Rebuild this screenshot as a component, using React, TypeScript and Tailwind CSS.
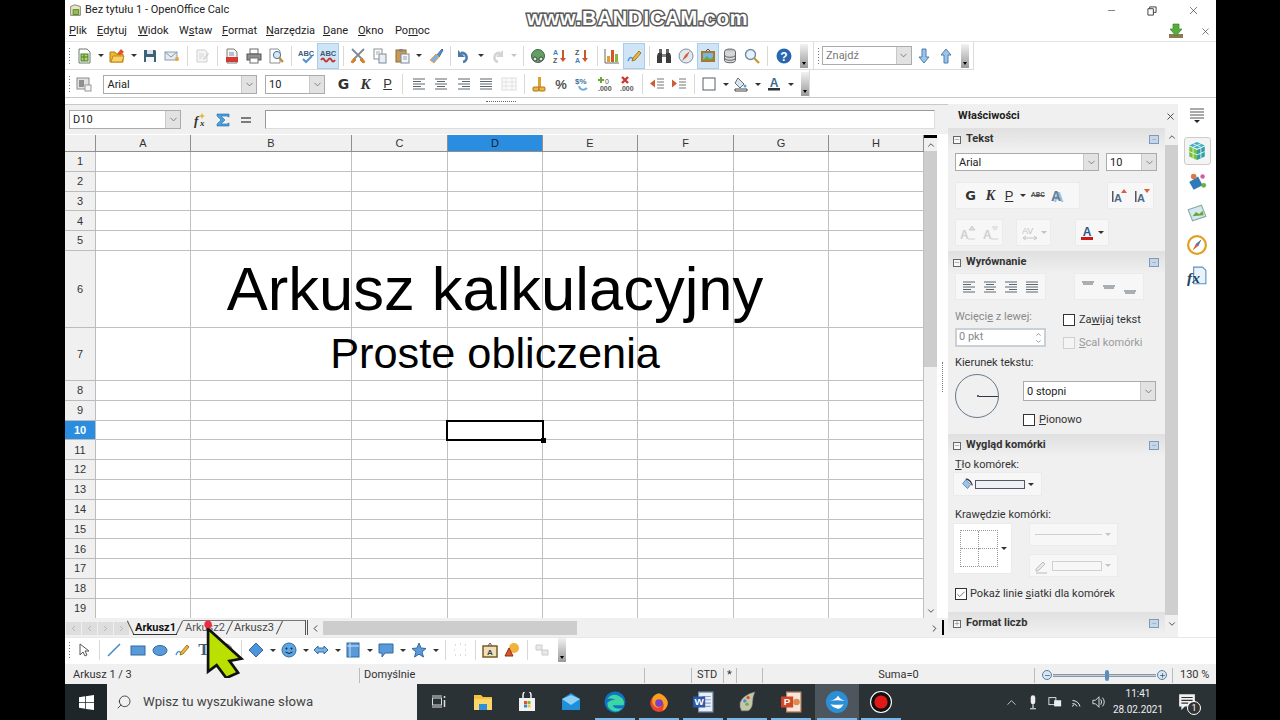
import React from "react";
import { ChevronDown, ChevronUp, ChevronLeft, ChevronRight, X, Minus, Plus, Search, Check } from "lucide-react";

const S = ({ children }: { children: React.ReactNode }) => (
  <svg viewBox="0 0 16 16" className="w-4 h-4 shrink-0">{children}</svg>
);
const Slot = ({ children, hl }: { children?: React.ReactNode; hl?: boolean }) => (
  <div className={`w-[22px] h-[26px] flex items-center justify-center shrink-0 ${hl ? "bg-[#cfe4f5] border border-[#a8cdec]" : ""}`}>{children}</div>
);
const Arrow = ({ dim }: { dim?: boolean }) => (
  <div className="w-[11px] h-[26px] flex items-center justify-center shrink-0">
    <div className={`w-0 h-0 border-l-[3px] border-r-[3px] border-t-[3px] border-l-transparent border-r-transparent ${dim ? "border-t-[#c4c4c4]" : "border-t-[#333]"}`} />
  </div>
);
const Sep = ({ narrow }: { narrow?: boolean }) => (
  <div className={`h-[26px] flex items-center justify-center shrink-0 ${narrow ? "w-[6px]" : "w-[8px]"}`}><div className="w-px h-[20px] bg-[#d8d8d8]" /></div>
);
const Grip = () => (
  <div className="w-[7px] h-[26px] ml-px flex flex-col justify-center gap-[2px] items-center shrink-0">
    {[0, 1, 2, 3, 4, 5].map((i) => <div key={i} className="w-px h-px bg-[#777]" />)}
  </div>
);
const Overflow = () => (
  <div className="w-[8px] h-[24px] bg-gradient-to-b from-[#f2f2f2] to-[#9a9a9a] relative shrink-0">
    <div className="absolute bottom-[3px] left-[2px] w-0 h-0 border-l-[2px] border-r-[2px] border-t-[3px] border-l-transparent border-r-transparent border-t-black" />
  </div>
);

const Ic = {
  calc: <S><path d="M3 1h8l3 3v11H3z" fill="#fff" stroke="#6b7a6b" /><rect x="5" y="6" width="7" height="7" fill="#a9d46a" stroke="#4d7d2c" /><path d="M5 9h7M8 6v7" stroke="#4d7d2c" /></S>,
  open: <S><path d="M1 4h5l1 2h7v8H1z" fill="#f2b632" stroke="#b57d10" /><path d="M8 6l4-5 3 3-4 3z" fill="#d9532c" /><path d="M2 14l2-6h11l-2 6z" fill="#f8d264" stroke="#c08a18" /></S>,
  save: <S><path d="M2 2h11l1 1v11H2z" fill="#3f6178" /><rect x="5" y="2" width="6" height="4" fill="#dbe4ec" /><rect x="4" y="9" width="8" height="5" fill="#f4f6f8" /></S>,
  mail: <S><rect x="1" y="4" width="12" height="8" fill="#e5ebf2" stroke="#8b9bad" /><path d="M1 4l6 5 6-5" fill="none" stroke="#8b9bad" /><circle cx="13" cy="11" r="2" fill="#e8a33a" /></S>,
  edit: <S><path d="M3 2h8l2 2v10H3z" fill="#f5f5f5" stroke="#cfcfcf" /><path d="M5 6h5M5 8h5M5 10h3" stroke="#d6d6d6" /><path d="M9 11l5-6 1 1-5 6z" fill="#cfcfcf" /></S>,
  pdf: <S><path d="M3 1h7l3 3v11H3z" fill="#f4f4f4" stroke="#7d7d7d" /><rect x="2" y="9" width="12" height="5" fill="#d63a2e" /><path d="M5 5h5M5 7h5" stroke="#7c8da0" /></S>,
  print: <S><rect x="4" y="1" width="8" height="5" fill="#fff" stroke="#6d6d6d" /><rect x="1" y="6" width="14" height="6" fill="#8f8f8f" stroke="#555" /><rect x="4" y="10" width="8" height="5" fill="#fff" stroke="#6d6d6d" /></S>,
  preview: <S><path d="M2 1h8l2 2v12H2z" fill="#fff" stroke="#8d8d8d" /><circle cx="9" cy="7" r="3.6" fill="#d5e8f7" stroke="#4a7299" /><path d="M11.5 10l3.5 4" stroke="#c58a2c" strokeWidth="2" /></S>,
  spell: <S><text x="0" y="7.5" fontSize="7.5" fontWeight="700" fill="#3d5a7a" fontFamily="Liberation Sans">ABC</text><path d="M5 11l3 3 6-6" fill="none" stroke="#4d94d8" strokeWidth="2" /></S>,
  auto: <S><text x="0" y="8" fontSize="7.5" fontWeight="700" fill="#3d5a7a" fontFamily="Liberation Sans">ABC</text><path d="M1 12q2-3 3.5 0t3.500 0 3.500 0 3.500 0" fill="none" stroke="#c9332b" strokeWidth="1.800" /></S>,
  cut: <S><path d="M2 1l10 10M14 1L4 11" stroke="#7f8a95" strokeWidth="1.800" /><path d="M4 10L1 14l2 1 3-3zM12 10l3 4-2 1-3-3z" fill="#d8802a" stroke="#d8802a" /></S>,
  copy: <S><rect x="2" y="1" width="8" height="10" fill="#fff" stroke="#8f8f8f" /><rect x="7" y="6" width="7" height="9" fill="#e8eef4" stroke="#7d8a97" /><path d="M4 4h4M4 6h2" stroke="#9aa" /></S>,
  paste: <S><rect x="2" y="2" width="10" height="12" fill="#c89a55" stroke="#8c6a32" /><rect x="5" y="1" width="4" height="3" fill="#888" /><rect x="7" y="6" width="8" height="9" fill="#f4f7fa" stroke="#7d8a97" /><path d="M9 9h4M9 11h4" stroke="#8fa3b5" /></S>,
  brush: <S><path d="M9 7l5-6 1 1-4 7z" fill="#5c93cf" stroke="#36689c" /><path d="M2 12l6-6 3 3-5 6z" fill="#7db1e4" stroke="#f0a53a" /></S>,
  undo: <S><path d="M5 5a4.500 4.500 0 1 1 2 9" fill="none" stroke="#4d7cab" strokeWidth="2.600" /><path d="M2 2v7h7z" fill="#4d7cab" /></S>,
  redo: <S><path d="M11 5a4.500 4.500 0 1 0-2 9" fill="none" stroke="#d4d4d4" strokeWidth="2.600" /><path d="M14 2v7H7z" fill="#d4d4d4" /></S>,
  globe: <S><circle cx="8" cy="8" r="6.500" fill="#62a060" stroke="#47604a" /><rect x="3" y="9" width="4" height="4" rx="2" fill="#e2e6ea" stroke="#444" /><rect x="9" y="9" width="4" height="4" rx="2" fill="#e2e6ea" stroke="#444" /></S>,
  sortAZ: <S><text x="1" y="7" fontSize="7" fontWeight="700" fill="#3d7fc0" fontFamily="Liberation Sans">A</text><text x="1" y="15" fontSize="7" fontWeight="700" fill="#555" fontFamily="Liberation Sans">Z</text><path d="M11 2v9" stroke="#c9572c" strokeWidth="2" /><path d="M8 10h6l-3 4z" fill="#c9572c" /></S>,
  sortZA: <S><text x="1" y="7" fontSize="7" fontWeight="700" fill="#555" fontFamily="Liberation Sans">Z</text><text x="1" y="15" fontSize="7" fontWeight="700" fill="#3d7fc0" fontFamily="Liberation Sans">A</text><path d="M11 2v9" stroke="#c9572c" strokeWidth="2" /><path d="M8 10h6l-3 4z" fill="#c9572c" /></S>,
  chart: <S><path d="M1 1v14h14" fill="none" stroke="#666" /><rect x="3" y="8" width="3" height="6" fill="#e2a02e" /><rect x="7" y="2" width="3" height="12" fill="#d4542c" /><rect x="11" y="6" width="3" height="8" fill="#8ab43a" /></S>,
  draw: <S><path d="M2 13q2-5 4-3t3 1" fill="none" stroke="#4d94d8" strokeWidth="1.500" /><path d="M7 10l6-7 2 2-6 7-3 1z" fill="#f0b63c" stroke="#a37820" /></S>,
  binoc: <S><path d="M2 5h4v10H1V8zM10 5h4l1 3v7h-5z" fill="#3c3c3c" /><rect x="3" y="1" width="3" height="4" fill="#666" /><rect x="10" y="1" width="3" height="4" fill="#666" /><rect x="6" y="6" width="4" height="3" fill="#888" /></S>,
  compass: <S><circle cx="8" cy="8" r="7" fill="#dfe9f2" stroke="#7e8f9e" /><path d="M12 3L9 9 4 13l3-6z" fill="#d9603a" /></S>,
  gallery: <S><rect x="1" y="3" width="14" height="11" fill="#a9772f" /><rect x="3" y="5" width="10" height="7" fill="#79b6e4" /><path d="M3 12l4-4 3 3 3-2v3z" fill="#6fa83a" /><path d="M6 3l2-2 2 2" stroke="#555" fill="none" /></S>,
  db: <S><ellipse cx="8" cy="3.500" rx="5.500" ry="2.500" fill="#bfc4c8" stroke="#666" /><path d="M2.500 3.500v9c0 3 11 3 11 0v-9" fill="#d5d8da" stroke="#666" /><path d="M2.500 7c0 3 11 3 11 0M2.500 10c0 3 11 3 11 0" fill="none" stroke="#666" /></S>,
  zoom: <S><circle cx="6.500" cy="6.500" r="5" fill="#e5f0fa" stroke="#6f8ba6" strokeWidth="1.400" /><path d="M10 10l5 5" stroke="#c89a3a" strokeWidth="2.400" /></S>,
  help: <S><circle cx="8" cy="8" r="7.500" fill="#2a67b0" /><text x="8" y="12.500" textAnchor="middle" fontSize="12" fontWeight="700" fill="#fff" fontFamily="Liberation Sans">?</text></S>,
  down: <S><path d="M6 1h4v8h3l-5 6-5-6h3z" fill="#9cc4e8" stroke="#4c7fb0" /></S>,
  up: <S><path d="M6 15h4V7h3L8 1 3 7h3z" fill="#9cc4e8" stroke="#4c7fb0" /></S>,
  styles: <S><rect x="1" y="2" width="12" height="11" fill="#e2e2e2" stroke="#8c8c8c" /><rect x="3" y="4" width="5" height="7" fill="#8f8f8f" /><rect x="9" y="9" width="6" height="6" fill="#f4f4f4" stroke="#999" /></S>,
  merge: <S><rect x="1" y="2" width="14" height="12" fill="#fbfbfb" stroke="#dedede" /><path d="M1 6h14M1 10h14M5 2v12M11 2v12" stroke="#e2e2e2" /></S>,
  coins: <S><path d="M7 1h3v10H7z" fill="#e0a030" /><rect x="2" y="11" width="6" height="4" rx="1" fill="#efb640" stroke="#a8741a" /><rect x="8" y="11" width="6" height="4" rx="1" fill="#efb640" stroke="#a8741a" /></S>,
  pct: <S><text x="8" y="13" textAnchor="middle" fontSize="13" fontWeight="700" fill="#555" fontFamily="Liberation Sans">%</text></S>,
  curpct: <S><text x="0" y="8" fontSize="8" fontWeight="700" fill="#3f6f9e" fontFamily="Liberation Sans">$%</text><path d="M4 10c1 4 5 5 8 2" fill="none" stroke="#6fb0de" strokeWidth="2" /></S>,
  dec1: <S><path d="M4 1v6M1 4h6" stroke="#6aa63a" strokeWidth="2" /><text x="8" y="8" fontSize="7" fill="#555" fontFamily="Liberation Sans">0</text><text x="1" y="15" fontSize="7" fontWeight="700" fill="#555" fontFamily="Liberation Sans">.000</text></S>,
  dec2: <S><path d="M3 1l6 6M9 1L3 7" stroke="#d0342c" strokeWidth="2.400" /><text x="1" y="15" fontSize="7" fontWeight="700" fill="#555" fontFamily="Liberation Sans">.000</text></S>,
  indL: <S><path d="M8 3h7M8 6h7M8 9h7M8 12h7" stroke="#777" /><path d="M1 7.500l5-4v8z" fill="#cf5a34" /></S>,
  indR: <S><path d="M8 3h7M8 6h7M8 9h7M8 12h7" stroke="#777" /><path d="M1 3.500l5 4-5 4z" fill="#cf5a34" /></S>,
  border: <S><rect x="2" y="2" width="12" height="12" fill="#fff" stroke="#55606c" /></S>,
  fill: <S><path d="M5 2l6 6-4 4-5-5z" fill="#d8e4ee" stroke="#5c7285" /><path d="M2 13h12v2H2z" fill="#fff" stroke="#444" /><circle cx="12" cy="10" r="1.500" fill="#5aa0d8" /></S>,
  fcolor: <S><text x="8" y="11" textAnchor="middle" fontSize="12" fontWeight="700" fill="#3a6b97" fontFamily="Liberation Sans">A</text><rect x="2" y="12" width="12" height="2.500" fill="#333" /></S>,
  fcolorR: <S><text x="8" y="11" textAnchor="middle" fontSize="12" fontWeight="700" fill="#2d5a88" fontFamily="Liberation Sans">A</text><rect x="2" y="12" width="12" height="3" fill="#d01818" /></S>,
  fx: <S><text x="1" y="13" fontSize="13" fontStyle="italic" fontWeight="700" fill="#333" fontFamily="Liberation Serif">f</text><text x="7" y="14" fontSize="9" fontStyle="italic" fontWeight="700" fill="#333" fontFamily="Liberation Serif">x</text><path d="M9 1l1 2 2 1-2 1-1 2-1-2-2-1 2-1z" fill="#e8b83c" /></S>,
  sum: <S><path d="M2 2h12v3l-2-1H6l4 4-4 4h6l2-1v3H2v-2l4-4-4-4z" fill="#4aa0de" stroke="#1f6aa8" strokeWidth=".6" /></S>,
  eq: <S><path d="M3 6h10M3 10h10" stroke="#555" strokeWidth="1.600" /></S>,
  alignL: <S><path d="M2 3h12M2 5.500h8M2 8h12M2 10.500h8M2 13h12" stroke="#5c6670" /></S>,
  alignC: <S><path d="M2 3h12M4 5.500h8M2 8h12M4 10.500h8M2 13h12" stroke="#5c6670" /></S>,
  alignR: <S><path d="M2 3h12M6 5.500h8M2 8h12M6 10.500h8M2 13h12" stroke="#5c6670" /></S>,
  alignJ: <S><path d="M2 3h12M2 5.500h12M2 8h12M2 10.500h12M2 13h12" stroke="#5c6670" /></S>,
  incA: <S><rect x="1" y="3" width="1.500" height="11" fill="#556" /><text x="3" y="14" fontSize="11" fontWeight="700" fill="#4a6a88" fontFamily="Liberation Sans">A</text><path d="M10 5l3-4 3 4z" fill="#d9603a" /></S>,
  decA: <S><rect x="1" y="3" width="1.500" height="11" fill="#556" /><text x="3" y="14" fontSize="11" fontWeight="700" fill="#4a6a88" fontFamily="Liberation Sans">A</text><path d="M10 1l3 4 3-4z" fill="#d9603a" /></S>,
  dimUp: <S><text x="0" y="14" fontSize="12" fontWeight="700" fill="#cfcfcf" fontFamily="Liberation Sans">A</text><path d="M9 5l3-4 3 4zM8 14h7" stroke="#cfcfcf" fill="#dcdcdc" /></S>,
  dimDn: <S><text x="0" y="14" fontSize="12" fontWeight="700" fill="#cfcfcf" fontFamily="Liberation Sans">A</text><path d="M9 2h6M10 4h4M8 14h7" stroke="#cfcfcf" /></S>,
  dimAV: <S><text x="0" y="9" fontSize="9" fill="#c4c4c4" fontFamily="Liberation Sans">AV</text><path d="M1 13h14M1 13l3-2M1 13l3 2M15 13l-3-2M15 13l-3 2" stroke="#c4c4c4" fill="none" /></S>,
  shadowA: <S><text x="2.500" y="14" fontSize="14" fontWeight="700" fill="#a8bccf" fontFamily="Liberation Sans">A</text><text x="0" y="13" fontSize="14" fontWeight="700" fill="#5a7f9f" fontFamily="Liberation Sans">A</text></S>,
};

const Combo = ({ text, className, dim }: { text: string; className: string; dim?: boolean }) => (
  <div className={`flex items-center bg-white border border-[#ababab] shrink-0 ${className}`}>
    <span className={`flex-1 pl-[3px] text-[11px] leading-none ${dim ? "text-[#777]" : "text-[#222]"}`}>{text}</span>
    <div className="w-[15px] h-full bg-[#e2e2e2] border-l border-[#c8c8c8] flex items-center justify-center">
      <ChevronDown size={11} strokeWidth={1.5} color="#555" />
    </div>
  </div>
);

const Toolbar1 = () => (
  <div className="h-[28px] flex items-center border-b border-[#dcdcdc] w-[909px] border-r pr-[4px]">
    <Grip />
    <Slot>{Ic.calc}</Slot><Arrow /><Slot>{Ic.open}</Slot><Arrow /><Slot>{Ic.save}</Slot><Slot>{Ic.mail}</Slot><Sep />
    <Slot>{Ic.edit}</Slot><Sep /><Slot>{Ic.pdf}</Slot><Slot>{Ic.print}</Slot><Slot>{Ic.preview}</Slot><Sep />
    <Slot>{Ic.spell}</Slot><Slot hl>{Ic.auto}</Slot><Sep />
    <Slot>{Ic.cut}</Slot><Slot>{Ic.copy}</Slot><Slot>{Ic.paste}</Slot><Arrow /><div className="w-[2px]" /><Slot>{Ic.brush}</Slot><Sep narrow />
    <Slot>{Ic.undo}</Slot><Arrow /><Slot>{Ic.redo}</Slot><Arrow dim /><Sep />
    <Slot>{Ic.globe}</Slot><Slot>{Ic.sortAZ}</Slot><Slot>{Ic.sortZA}</Slot><Sep />
    <Slot>{Ic.chart}</Slot><Slot hl>{Ic.draw}</Slot><Sep />
    <Slot>{Ic.binoc}</Slot><Slot>{Ic.compass}</Slot><Slot hl>{Ic.gallery}</Slot><Slot>{Ic.db}</Slot><Slot>{Ic.zoom}</Slot><Sep />
    <div className="w-[4px]" /><Slot>{Ic.help}</Slot><div className="w-[9px]" /><Overflow />
    <div className="w-px h-[28px] bg-[#dcdcdc] ml-[5px]" />
    <Grip />
    <Combo text="Znajdź" dim className="w-[90px] h-[19px]" />
    <div className="w-[1px]" /><Slot>{Ic.down}</Slot><Slot>{Ic.up}</Slot><div className="w-[8px]" /><Overflow />
  </div>
);

const Toolbar2 = () => (
  <div className="h-[28px] flex items-center w-[745px] border-r border-[#dcdcdc]">
    <Grip />
    <Slot>{Ic.styles}</Slot><div className="w-[9px]" />
    <Combo text="Arial" className="w-[154px] h-[19px]" /><div className="w-[8px]" />
    <Combo text="10" className="w-[60px] h-[19px]" /><div className="w-[8px]" />
    <Slot><span className="text-[14px] font-bold text-[#333] font-['DejaVu_Sans',sans-serif]">G</span></Slot>
    <Slot><span className="text-[15px] font-bold italic text-[#333] font-['Liberation_Serif',serif]">K</span></Slot>
    <Slot><span className="text-[13px] underline text-[#333] font-['Liberation_Sans',sans-serif]">P</span></Slot><Sep /><div className="w-[2px]" />
    <Slot>{Ic.alignL}</Slot><Slot>{Ic.alignC}</Slot><div className="w-px" /><Slot>{Ic.alignR}</Slot><Slot>{Ic.alignJ}</Slot><div className="w-px" /><Slot>{Ic.merge}</Slot><Sep />
    <Slot>{Ic.coins}</Slot><Slot>{Ic.pct}</Slot><Slot>{Ic.curpct}</Slot><Slot>{Ic.dec1}</Slot><Slot>{Ic.dec2}</Slot><Sep />
    <Slot>{Ic.indL}</Slot><Slot>{Ic.indR}</Slot><Sep />
    <Slot>{Ic.border}</Slot><Arrow /><div className="-ml-px" /><Slot>{Ic.fill}</Slot><Arrow /><Slot>{Ic.fcolor}</Slot><Arrow /><div className="w-[5px]" /><Overflow />
  </div>
);

const U = ({ pre = "", c, post = "" }: { pre?: string; c: string; post?: string }) => (
  <span>{pre}<span className="underline">{c}</span>{post}</span>
);

const Menu = () => (
  <div className="h-[21px] flex items-center pl-[4px] text-[11px] text-[#222] border-b border-[#e4e4e4]">
    <div className="w-[28px]"><U c="P" post="lik" /></div>
    <div className="w-[41px]"><U c="E" post="dytuj" /></div>
    <div className="w-[41px]"><U c="W" post="idok" /></div>
    <div className="w-[43px]"><U pre="W" c="s" post="taw" /></div>
    <div className="w-[44px]"><U c="F" post="ormat" /></div>
    <div className="w-[57px]"><U c="N" post="arzędzia" /></div>
    <div className="w-[35px]"><U c="D" post="ane" /></div>
    <div className="w-[37px]"><U c="O" post="kno" /></div>
    <div className="w-[40px]"><U pre="Po" c="m" post="oc" /></div>
    <div className="flex-1" />
    <svg viewBox="0 0 16 16" className="w-4 h-4 mr-[16px]"><rect x="1" y="11" width="14" height="4" fill="#8a7a4f" /><path d="M5 1h6v5h3l-6 7-6-7h3z" fill="#55ad3c" stroke="#2f7a20" strokeWidth=".6" /></svg>
    <X size={11} strokeWidth={1.5} color="#444" className="mr-[5px]" />
  </div>
);

const cols = ["A", "B", "C", "D", "E", "F", "G", "H"];
const rowNums = Array.from({ length: 19 }, (_, i) => i + 1);

const Sheet = () => (
  <div className="grid grid-cols-[31px_95px_161px_96px_95px_95px_96px_95px_95px] grid-rows-[17px_19.8px_19.8px_19.8px_19.8px_19.8px_77px_53px_19.8px_19.8px_19.8px_19.8px_19.8px_19.8px_19.8px_19.8px_19.8px_19.8px_19.8px_19.8px] w-[859px] h-[483px] overflow-hidden bg-white text-[11px] font-['Liberation_Sans',sans-serif]">
    <div className="bg-[#f0f0f0] border-r border-b border-[#8f8f8f]" />
    {cols.map((c) => (
      <div key={c} className={`flex items-center justify-center border-r border-b border-[#8f8f8f] ${c === "D" ? "bg-[#2b8de0] text-[#123]" : "bg-[#f0f0f0] text-[#333]"}`}>{c}</div>
    ))}
    {rowNums.map((r) => (
      <React.Fragment key={r}>
        <div className={`flex items-center justify-center border-r border-b border-[#bcbcbc] ${r === 10 ? "bg-[#2b8de0] text-white font-bold" : "bg-[#f0f0f0] text-[#333]"}`}>{r}</div>
        {cols.map((c) => (
          <div key={c} className={`flex items-center justify-center relative ${c === "D" && r === 10 ? "border-2 border-black -ml-[2px] -mr-px -mt-px -mb-px z-10" : "border-r border-b border-[#c0c0c0]"}`}>
            {c === "D" && r === 6 && <span className="whitespace-nowrap text-[61.5px] leading-none text-black z-10">Arkusz kalkulacyjny</span>}
            {c === "D" && r === 7 && <span className="whitespace-nowrap text-[43.3px] leading-none text-black z-10">Proste obliczenia</span>}
            {c === "D" && r === 10 && <div className="absolute -right-[4px] -bottom-[4px] w-[5px] h-[5px] bg-black" />}
          </div>
        ))}
      </React.Fragment>
    ))}
  </div>
);

const Section = ({ title, open, tight }: { title: string; open?: boolean; tight?: boolean }) => (
  <div className={`flex items-center bg-gradient-to-b from-[#e0e0e0] to-[#f0f0f0] pl-[5px] pr-[6px] shrink-0 ${tight ? "h-[22px]" : "h-[23px]"}`}>
    <div className="w-[8px] h-[8px] border border-[#666] flex items-center justify-center bg-white/60 mr-[5px]">
      {open ? <Plus size={7} strokeWidth={1.5} color="#444" /> : <Minus size={7} strokeWidth={1.5} color="#444" />}
    </div>
    <span className="text-[11px] font-bold text-[#333] flex-1">{title}</span>
    <div className="w-[10px] h-[9px] bg-[#c3d6ea] border border-[#7f9ab8] text-[6px] leading-[4px] text-center text-[#345]">…</div>
  </div>
);

const Group = ({ className, children }: { className: string; children?: React.ReactNode }) => (
  <div className={`bg-[#f7f7f7] border border-[#ebebeb] flex items-center shrink-0 ${className}`}>{children}</div>
);

const Box = ({ checked, dim }: { checked?: boolean; dim?: boolean }) => (
  <div className={`w-[12px] h-[12px] border flex items-center justify-center shrink-0 ${dim ? "border-[#d0d0d0] bg-[#f4f4f4]" : "border-[#333] bg-white"}`}>
    {checked && <Check size={11} strokeWidth={1.5} color="#222" />}
  </div>
);

const Sidebar = () => (
  <div className="w-[230px] flex flex-col shrink-0 bg-[#f0f0f0] relative">
    <div className="h-[24px] flex items-center justify-between pl-[10px] pr-[2px] shrink-0 -mt-[30px] bg-[#f0f0f0]">
      <span className="text-[11px] font-bold text-[#222]">Właściwości</span>
      <X size={11} strokeWidth={2} color="#444" />
    </div>
    <div className="flex flex-1 min-h-0">
      <div className="w-[217px] flex flex-col text-[11px] text-[#333]">
        <Section title="Tekst" />
        <div className="flex mt-[2px] pl-[7px] gap-[7px]">
          <Combo text="Arial" className="w-[144px] h-[18px]" />
          <Combo text="10" className="w-[51px] h-[18px]" />
        </div>
        <div className="flex mt-[11px] pl-[7px]">
          <Group className="w-[125px] h-[27px] pl-[5px]">
            <span className="w-[19px] text-[13px] font-bold text-center font-['DejaVu_Sans',sans-serif]">G</span>
            <span className="w-[21px] text-[14px] font-bold italic text-center font-['Liberation_Serif',serif]">K</span>
            <span className="w-[16px] text-[13px] underline text-center font-['Liberation_Sans',sans-serif]">P</span>
            <Arrow />
            <span className="w-[20px] text-[7px] font-bold text-center text-[#555] line-through">ABC</span>
            <div className="w-[22px] flex justify-center">{Ic.shadowA}</div>
          </Group>
          <Group className="w-[47px] h-[27px] ml-[27px] justify-around">{Ic.incA}{Ic.decA}</Group>
        </div>
        <div className="flex mt-[10px] pl-[7px]">
          <Group className="w-[48px] h-[27px] justify-around">{Ic.dimUp}{Ic.dimDn}</Group>
          <Group className="w-[35px] h-[27px] ml-[13px] pl-[5px]">{Ic.dimAV}<Arrow dim /></Group>
          <Group className="w-[34px] h-[27px] ml-[24px] pl-[3px]">{Ic.fcolorR}<Arrow /></Group>
        </div>
        <div className="mt-[5px]"><Section title="Wyrównanie" /></div>
        <div className="flex -mt-px pl-[7px]">
          <Group className="w-[91px] h-[27px] justify-around px-[3px]">{Ic.alignL}{Ic.alignC}{Ic.alignR}{Ic.alignJ}</Group>
          <Group className="w-[70px] h-[27px] ml-[28px] justify-around px-[2px]">
            <svg viewBox="0 0 16 16" className="w-4 h-4"><path d="M2 3h12M3 5h10" stroke="#5c6670" /></svg>
            <svg viewBox="0 0 16 16" className="w-4 h-4"><path d="M2 7h12M3 9h10" stroke="#5c6670" /></svg>
            <svg viewBox="0 0 16 16" className="w-4 h-4"><path d="M2 12h12M3 14h10" stroke="#5c6670" /></svg>
          </Group>
        </div>
        <div className="flex mt-[9px] h-[46px] pl-[7px]">
          <div className="w-[108px]">
            <div className="h-[17px] flex items-center text-[#8a8a8a]"><U pre="Wcięci" c="e" post=" z lewej:" /></div>
            <div className="mt-[2px] w-[91px] h-[19px] bg-white border-2 border-[#c9d0d6] flex items-center pl-[2px] text-[#888]">
              <span className="flex-1">0 pkt</span>
              <div className="w-[12px] flex flex-col items-center text-[#555]"><ChevronUp size={7} /><ChevronDown size={7} /></div>
            </div>
          </div>
          <div className="flex flex-col">
            <div className="mt-[4px] h-[14px] flex items-center gap-[4px]"><Box /><U pre="Za" c="w" post="ijaj tekst" /></div>
            <div className="mt-[9px] h-[14px] flex items-center gap-[4px] text-[#9a9a9a]"><Box dim /><U c="S" post="cal komórki" /></div>
          </div>
        </div>
        <div className="h-[16px] pl-[7px] flex items-center">Kierunek tekstu:</div>
        <div className="flex h-[63px] pl-[7px]">
          <div className="w-[44px] h-[44px] mt-[3px] rounded-full border border-[#66788a] relative flex items-center shrink-0">
            <div className="ml-[21px] w-[2px] h-[2px] bg-[#334] rounded-full" />
            <div className="w-[20px] h-px bg-[#334]" />
          </div>
          <div className="ml-[24px] flex flex-col">
            <Combo text="0 stopni" className="w-[133px] h-[20px] mt-[10px]" />
            <div className="mt-[12px] h-[14px] flex items-center gap-[4px]"><Box /><U c="P" post="ionowo" /></div>
          </div>
        </div>
        <Section title="Wygląd komórki" />
        <div className="h-[16px] pl-[7px] flex items-center"><U c="T" post="ło komórek:" /></div>
        <Group className="ml-[5px] -mt-px w-[89px] h-[24px] pl-[7px] bg-[#f5f5f5]">
          <svg viewBox="0 0 16 16" className="w-[13px] h-[13px]"><path d="M6 2l6 6-4 5-6-6z" fill="#9cc4e8" stroke="#4c7fb0" /><path d="M6 1q6 1 8 8" fill="none" stroke="#333" strokeWidth="1.500" /></svg>
          <div className="ml-px w-[50px] h-[9px] border border-[#556] bg-[#eef1f4]" />
          <Arrow />
        </Group>
        <div className="h-[16px] mt-[11px] pl-[7px] flex items-center">Krawędzie komórki:</div>
        <div className="flex pl-[5px]">
          <Group className="w-[59px] h-[51px] pl-[6px] bg-white">
            <div className="w-[38px] h-[37px] grid grid-cols-2 grid-rows-2 border border-dotted border-[#999]">
              <div className="border-r border-b border-dotted border-[#999]" /><div className="border-b border-dotted border-[#999]" /><div className="border-r border-dotted border-[#999]" /><div />
            </div>
            <Arrow />
          </Group>
          <div className="ml-[17px] flex flex-col gap-[8px]">
            <Group className="w-[89px] h-[23px] pl-[5px]"><div className="w-[67px] h-px bg-[#cfcfcf]" /><Arrow dim /></Group>
            <Group className="w-[89px] h-[23px] pl-[3px]">
              <svg viewBox="0 0 16 16" className="w-4 h-4"><path d="M3 11l7-7 2 2-7 7H3z" fill="#e8e8e8" stroke="#c0c0c0" /><path d="M3 15h11" stroke="#bbb" /></svg>
              <div className="ml-[3px] w-[50px] h-[10px] border border-[#d0d0d0]" />
              <Arrow dim />
            </Group>
          </div>
        </div>
        <div className="mt-[10px] h-[14px] pl-[7px] flex items-center gap-[3px]"><Box checked /><span>Pokaż linie <span className="underline">s</span>iatki dla komórek</span></div>
        <div className="mt-[11px]"><Section title="Format liczb" open /></div>
      </div>
      <div className="w-[13px] flex flex-col items-center bg-[#cfcfcf] mb-[5px]">
        <div className="h-[17px] w-full bg-[#f0f0f0] flex items-center justify-center"><ChevronUp size={10} strokeWidth={2} color="#333" /></div>
        <div className="flex-1" />
        <div className="h-[17px] w-full bg-[#f0f0f0] flex items-center justify-center"><ChevronDown size={10} strokeWidth={2} color="#333" /></div>
      </div>
    </div>
  </div>
);

const DeckBar = () => (
  <div className="w-[38px] flex flex-col items-center bg-white shrink-0 -mt-[30px] relative">
    <svg viewBox="0 0 16 16" className="w-4 h-4 mt-[3px]"><path d="M1 2h14M1 5h14M1 8h14M1 11h14" stroke="#555" /><path d="M5 13h6l-3 3z" fill="#222" /></svg>
    <div className="mt-[14px] w-[27px] h-[28px] bg-[#f4f4f4] border border-[#ccc] rounded-[3px] flex items-center justify-center">
      <svg viewBox="0 0 18 18" className="w-[20px] h-[20px]"><path d="M9 1l7 3-7 3-7-3z" fill="#39b0c8" /><path d="M2 5l7 3v9l-7-3z" fill="#78c23c" /><path d="M16 5L9 8v9l7-3z" fill="#2f9ea8" /><path d="M5.500 2.500l7 3M12.500 2.500l-7 3M2 9.500l7 3 7-3M5.500 6.500v9M12.500 6.500v9" fill="none" stroke="#eaf6f0" strokeWidth=".8" /></svg>
    </div>
    <svg viewBox="0 0 18 18" className="w-[20px] h-[20px] mt-[7px]"><path d="M2 9l8-5 4 8-8 4z" fill="#2f7ab8" /><circle cx="6" cy="4" r="2.500" fill="#e0744a" /><circle cx="14" cy="4" r="2" fill="#d858a8" /><circle cx="15" cy="12" r="2.200" fill="#6cb044" /></svg>
    <svg viewBox="0 0 18 18" className="w-[20px] h-[20px] mt-[11px]"><path d="M1 6l12-4 4 10-12 4z" fill="#d5e8f2" stroke="#8aa" /><path d="M5 12l3-4 3 2 3-3 1 4z" fill="#6aa83a" /></svg>
    <svg viewBox="0 0 18 18" className="w-[20px] h-[20px] mt-[12px]"><circle cx="9" cy="9" r="8" fill="#fff" stroke="#e0a020" strokeWidth="2" /><path d="M13 4l-3 6-5 4 3-6z" fill="#d9603a" /><path d="M13 4l-5 4 2 2z" fill="#4c7fb0" /></svg>
    <svg viewBox="0 0 18 18" className="w-[20px] h-[20px] mt-[11px]"><path d="M6 1h8l3 3v12H6z" fill="#eaf3fa" stroke="#5c90c0" /><text x="0" y="15" fontSize="14" fontStyle="italic" fontWeight="700" fill="#24435f" fontFamily="Liberation Serif">fx</text></svg>
  </div>
);

const TabsBar = () => (
  <div className="h-[19px] flex items-stretch bg-[#f0f0f0] text-[11px] text-[#333]">
    <div className="flex items-center w-[64px] pl-px gap-px pt-px">
      {[0, 1, 2, 3].map((i) => (
        <div key={i} className="w-[15px] h-[13px] bg-[#dedede] flex items-center justify-center">
          {i < 2 ? <ChevronLeft size={9} color="#aaa" /> : <ChevronRight size={9} color="#aaa" />}
        </div>
      ))}
    </div>
    <div className="flex items-center w-[176px] pt-[2px] relative">
      <span className="font-bold ml-[6px] w-[50px] text-[#111]">Arkusz1</span>
      <span className="w-[49px] text-[#555]">Arkusz2</span>
      <span className="text-[#444]">Arkusz3</span>
      <div className="absolute left-[1px] top-[2px] w-px h-[15px] bg-[#555] -rotate-[25deg]" />
      <div className="absolute left-[50px] top-[2px] w-px h-[15px] bg-[#555] rotate-[25deg]" />
      <div className="absolute left-[100px] top-[2px] w-px h-[15px] bg-[#555] rotate-[25deg]" />
      <div className="absolute left-[150px] top-[2px] w-px h-[15px] bg-[#555] rotate-[25deg]" />
      <div className="absolute left-[54px] right-0 top-[2px] h-px bg-[#777]" />
      <div className="absolute left-[4px] w-[44px] bottom-[2px] h-px bg-[#333]" />
    </div>
    <div className="w-[3px] h-[15px] mt-[2px] border-x border-[#555]" />
    <div className="w-[15px] flex items-center justify-center pt-px"><ChevronLeft size={11} strokeWidth={2} color="#333" /></div>
    <div className="flex-1 flex items-center pt-px">
      <div className="w-[254px] h-[14px] bg-[#cdcdcd]" />
    </div>
    <div className="w-[15px] flex items-center justify-center pt-px"><ChevronRight size={11} strokeWidth={2} color="#333" /></div>
    <div className="w-[2px] h-[15px] mt-[2px] bg-black" />
    <div className="w-[4px]" />
  </div>
);

const DrawBar = () => (
  <div className="h-[27px] flex items-center bg-white border-t border-[#e8e8e8] pb-[2px]">
    <Grip />
    <Slot>
      <svg viewBox="0 0 16 16" className="w-4 h-4"><path d="M4 2v11l3-3 2 4 2-1-2-4h4z" fill="#fff" stroke="#555" /></svg>
    </Slot>
    <Sep />
    <Slot><svg viewBox="0 0 16 16" className="w-4 h-4"><path d="M2 14L14 2" stroke="#3f86c8" strokeWidth="1.500" /></svg></Slot><div className="w-[2px]" />
    <Slot><svg viewBox="0 0 16 16" className="w-4 h-4"><rect x="1" y="4" width="14" height="9" fill="#5a9ad8" stroke="#2f6aa0" /></svg></Slot>
    <Slot><svg viewBox="0 0 16 16" className="w-4 h-4"><ellipse cx="8" cy="8.500" rx="7" ry="5" fill="#5a9ad8" stroke="#2f6aa0" /></svg></Slot>
    <Slot>{Ic.draw}</Slot>
    <Slot><span className="text-[17px] font-bold text-[#3a5a78] font-['Liberation_Serif',serif]">T</span></Slot>
    <Slot><svg viewBox="0 0 16 16" className="w-4 h-4"><circle cx="8" cy="8" r="6" fill="#eee" stroke="#777" /></svg></Slot>
    <Sep />
    <Slot><svg viewBox="0 0 16 16" className="w-4 h-4"><path d="M8 1l7 7-7 7-7-7z" fill="#4d94d8" stroke="#2f6aa0" /></svg></Slot><Arrow />
    <Slot><svg viewBox="0 0 16 16" className="w-4 h-4"><circle cx="8" cy="8" r="7" fill="#5fa7e4" stroke="#2f6aa0" /><circle cx="5.500" cy="6.500" r="1" fill="#123" /><circle cx="10.500" cy="6.500" r="1" fill="#123" /><path d="M4.500 10q3.500 3 7 0" fill="none" stroke="#123" /></svg></Slot><Arrow />
    <div className="-ml-px" /><Slot><svg viewBox="0 0 16 16" className="w-4 h-4"><path d="M1 8l4-4v2h6V4l4 4-4 4v-2H5v2z" fill="#79b2e6" stroke="#2f6aa0" /></svg></Slot><Arrow />
    <div className="-ml-px" /><Slot><svg viewBox="0 0 16 16" className="w-4 h-4"><rect x="2" y="1" width="12" height="14" fill="#5a9ad8" stroke="#2f6aa0" /><path d="M5 1v14M2 4h12" stroke="#cfe4f5" /></svg></Slot><Arrow />
    <Slot><svg viewBox="0 0 16 16" className="w-4 h-4"><path d="M1 2h14v9H7l-3 4v-4H1z" fill="#5a9ad8" stroke="#2f6aa0" /></svg></Slot><Arrow />
    <Slot><svg viewBox="0 0 16 16" className="w-4 h-4"><path d="M8 1l2 5 5 .5-4 3.500 1.500 5L8 12.200 3.500 15 5 10 1 6.500 6 6z" fill="#5a9ad8" stroke="#2f6aa0" /></svg></Slot><Arrow />
    <Sep />
    <Slot><svg viewBox="0 0 16 16" className="w-4 h-4"><path d="M3 3h1M8 2h1M13 3h1M2 8h1M13 8h1M3 13h1M8 13h1M13 13h1" stroke="#bbb" /></svg></Slot>
    <Sep />
    <Slot><svg viewBox="0 0 16 16" className="w-4 h-4"><rect x="1" y="4" width="14" height="11" fill="#f0e0b8" stroke="#7a5a24" strokeWidth="1.500" /><path d="M6 4l2-3 2 3" fill="none" stroke="#555" /><text x="8" y="13" textAnchor="middle" fontSize="8" fontWeight="700" fill="#345" fontFamily="Liberation Sans">A</text></svg></Slot>
    <Slot><svg viewBox="0 0 16 16" className="w-4 h-4"><circle cx="10" cy="6" r="5" fill="#f0b23c" /><path d="M1 14l4-8 4 8z" fill="#d9532c" stroke="#8a3318" /></svg></Slot>
    <Sep />
    <Slot><svg viewBox="0 0 16 16" className="w-4 h-4"><path d="M2 3h6v5H2zM8 8h6v5H8z" fill="#e8e8e8" stroke="#ccc" /></svg></Slot>
    <div className="w-[5px]" /><Overflow />
  </div>
);

const StatusBar = () => (
  <div className="h-[20px] flex items-center bg-[#f0f0f0] text-[11px] text-[#333] pt-[2px]">
    <div className="w-[294px] pl-[8px]">Arkusz 1 / 3</div>
    <div className="w-[285px] h-[15px] flex items-center border-l border-[#bbb] pl-[4px]">Domyślnie</div>
    <div className="w-[47px] h-[15px] border-l border-[#bbb]" />
    <div className="w-[32px] h-[15px] flex items-center border-l border-[#bbb] pl-[5px]">STD</div>
    <div className="w-[13px] h-[15px] flex items-center border-l border-[#bbb] pl-[3px]">*</div>
    <div className="w-[26px] h-[15px] border-l border-[#bbb]" />
    <div className="w-[272px] h-[15px] flex items-center justify-center border-l border-[#bbb]">Suma=0</div>
    <div className="w-[138px] h-[15px] flex items-center border-l border-[#bbb] pl-[7px]">
      <div className="w-[10px] h-[10px] rounded-full border border-[#5c7f9f] bg-[#d5e6f4] flex items-center justify-center shrink-0"><Minus size={7} color="#234" /></div>
      <div className="w-[103px] mx-[1px] h-[3px] bg-[#c4ccd4] border-y border-[#8a98a6] relative shrink-0">
        <div className="absolute left-[52px] -top-[5px] w-[4px] h-[11px] bg-[#5c8fbf] rounded-sm" />
      </div>
      <div className="w-[10px] h-[10px] rounded-full border border-[#5c7f9f] bg-[#d5e6f4] flex items-center justify-center shrink-0"><Plus size={7} color="#234" /></div>
    </div>
    <div className="flex-1 h-[15px] flex items-center border-l border-[#bbb] pl-[7px]">130 %</div>
  </div>
);

const TaskIcon = ({ children, running, active }: { children: React.ReactNode; running?: boolean; active?: boolean }) => (
  <div className={`w-[44px] h-[36px] flex items-center justify-center relative shrink-0 ${active ? "bg-[#4c565c]" : ""}`}>
    {children}
    {running && <div className="absolute bottom-0 left-[2px] right-[2px] h-[2px] bg-[#76b9ed]" />}
  </div>
);

const Taskbar = () => (
  <div className="h-[36px] flex items-center bg-[#2b3236] text-white shrink-0">
    <div className="w-[42px] h-full bg-[#1f2629] flex items-center justify-center">
      <svg viewBox="0 0 16 16" className="w-[15px] h-[15px]"><path d="M0 2.300l6.500-.9v6.200H0zM7.300 1.300L16 0v7.600H7.300zM0 8.400h6.500v6.200L0 13.700zM7.300 8.400H16V16l-8.700-1.200z" fill="#fff" /></svg>
    </div>
    <div className="w-[310px] h-full bg-[#f0f0f0] flex items-center pl-[9px] gap-[11px] text-[#444] text-[13.2px]">
      <Search size={16} strokeWidth={1.3} color="#333" className="-scale-x-100" />
      <span>Wpisz tu wyszukiwane słowa</span>
    </div>
    <TaskIcon><svg viewBox="0 0 16 16" className="w-4 h-4"><path d="M1 2h10M1 13h10" stroke="#ddd" /><rect x="1.500" y="4" width="9" height="7" fill="none" stroke="#ddd" /><path d="M13.500 2v2M13.500 6v7" stroke="#ddd" strokeWidth="1.500" /></svg></TaskIcon>
    <TaskIcon><svg viewBox="0 0 20 20" className="w-5 h-5"><path d="M1 3h7l2 2h9v13H1z" fill="#f5c33b" /><rect x="1" y="7" width="18" height="11" fill="#fbd66a" /><rect x="6" y="12" width="8" height="6" fill="#2f8fd8" /></svg></TaskIcon>
    <TaskIcon><svg viewBox="0 0 20 20" className="w-5 h-5"><path d="M2 6h16v13H2z" fill="#f2f2f2" /><path d="M6 6V3a4 4 0 0 1 8 0v3" fill="none" stroke="#f2f2f2" strokeWidth="1.500" /><rect x="7" y="9" width="3" height="3" fill="#e34f26" /><rect x="10.500" y="9" width="3" height="3" fill="#7cb93c" /><rect x="7" y="12.500" width="3" height="3" fill="#2f8fd8" /><rect x="10.500" y="12.500" width="3" height="3" fill="#f5c33b" /></svg></TaskIcon>
    <TaskIcon><svg viewBox="0 0 20 20" className="w-5 h-5"><path d="M1 7l9-6 9 6v11H1z" fill="#1f8fd8" /><path d="M1 7l9 6 9-6v0L10 3z" fill="#8fd0f5" /></svg></TaskIcon>
    <TaskIcon running><svg viewBox="0 0 20 20" className="w-[22px] h-[22px]"><circle cx="10" cy="10" r="9.500" fill="#1273c4" /><path d="M3 7q6-7 14 0 2 3 1 6H8q1 3 5 3t4-1q-3 4-8 3.500Q3 17 3 11q3-3 7-3 3 0 4 2Q9 6 3 7z" fill="#3cd6a4" /></svg></TaskIcon>
    <TaskIcon running><svg viewBox="0 0 20 20" className="w-[22px] h-[22px]"><circle cx="10" cy="11" r="8" fill="#e8442f" /><path d="M10 2q6 2 8 8 0 6-5 8 3-6-1-10-4 0-4 3l5 2q-2 3-5 2-5-2-4-8 1-4 6-5z" fill="#f8a01e" /><circle cx="10" cy="11" r="3.500" fill="#7b3fc8" /></svg></TaskIcon>
    <TaskIcon running><svg viewBox="0 0 20 20" className="w-[22px] h-[22px]"><path d="M6 1h13v18H6z" fill="#e8eef6" stroke="#7a94b8" /><path d="M9 5h8M9 8h8M9 11h8M9 14h8" stroke="#8aa4c8" /><rect x="1" y="5" width="11" height="10" fill="#2b5ba8" /><text x="6.500" y="13" textAnchor="middle" fontSize="9" fontWeight="700" fill="#fff" fontFamily="Liberation Sans">W</text></svg></TaskIcon>
    <TaskIcon running><svg viewBox="0 0 20 20" className="w-[22px] h-[22px]"><path d="M5 18q-4-8 3-13 4-3 9-4-2 5-2 9 0 6-4 8z" fill="#c6c6a8" stroke="#888" strokeWidth=".5" /><circle cx="8" cy="9" r="1.500" fill="#3c8fd0" /><circle cx="11" cy="6" r="1.500" fill="#d8502c" /><circle cx="10" cy="12" r="1.500" fill="#6cb044" /></svg></TaskIcon>
    <TaskIcon running><svg viewBox="0 0 20 20" className="w-[22px] h-[22px]"><path d="M6 1h13v18H6z" fill="#f7e6da" stroke="#c08868" /><rect x="1" y="5" width="11" height="10" fill="#d24726" /><text x="6.500" y="13" textAnchor="middle" fontSize="9" fontWeight="700" fill="#fff" fontFamily="Liberation Sans">P</text><circle cx="15" cy="10" r="3" fill="#e08a50" /></svg></TaskIcon>
    <div className="w-[2px]" />
    <TaskIcon running active><svg viewBox="0 0 20 20" className="w-[22px] h-[22px]"><circle cx="10" cy="10" r="10" fill="#2b8fd8" /><path d="M3 9q6-1 8-5 1 3 6 5-7-1-14 0zM4 12q6 1 12 0-3 5-6 4-4-1-6-4z" fill="#fff" /></svg></TaskIcon>
    <TaskIcon running><svg viewBox="0 0 20 20" className="w-[22px] h-[22px]"><circle cx="10" cy="10" r="9.500" fill="#111" stroke="#fff" /><circle cx="10" cy="10" r="6" fill="#e01818" /></svg></TaskIcon>
    <div className="flex-1 flex items-center justify-end">
      <ChevronUp size={15} strokeWidth={1.2} color="#eee" className="mr-[8px] shrink-0" />
      <svg viewBox="0 0 16 20" className="w-[12px] h-[18px] mr-[9px] shrink-0"><rect x="5" y="1" width="6" height="12" rx="3" fill="#eee" /><path d="M8 13v5M4 19h8" stroke="#eee" strokeWidth="1.500" /></svg>
      <svg viewBox="0 0 16 16" className="w-[14px] h-[14px] mr-[9px] shrink-0"><rect x="1" y="3" width="8" height="8" fill="none" stroke="#eee" /><rect x="7" y="6" width="8" height="7" fill="#eee" /></svg>
      <svg viewBox="0 0 16 16" className="w-[12px] h-[12px] mr-[9px] shrink-0"><path d="M2 14a2 2 0 0 1 2-2M2 10a6 6 0 0 1 6 4M2 6a11 11 0 0 1 10 8" fill="none" stroke="#eee" strokeWidth="1.300" /></svg>
      <svg viewBox="0 0 16 16" className="w-[14px] h-[14px] shrink-0"><path d="M1 6h3l4-4v12l-4-4H1z" fill="none" stroke="#eee" /><path d="M10 5q2 3 0 6M12 3q4 5 0 10" fill="none" stroke="#eee" /></svg>
      <div className="w-[64px] flex flex-col items-center text-[10px] leading-[16px] text-[#eee] mr-[8px] shrink-0">
        <span>11:41</span><span>28.02.2021</span>
      </div>
      <div className="relative w-[18px] h-[18px] mr-[20px] shrink-0">
        <svg viewBox="0 0 16 16" className="w-[18px] h-[18px]"><path d="M1 1h14v11H6l-3 3v-3H1z" fill="#f0f0f0" /><path d="M3 4h10M3 6.500h10M3 9h6" stroke="#333" /></svg>
        <div className="absolute -right-[5px] -bottom-[4px] w-[14px] h-[14px] rounded-full bg-[#333] border border-white text-[9px] leading-[12px] text-center">1</div>
      </div>
    </div>
  </div>
);

export default function App() {
  return (
    <div className="w-[1280px] h-[720px] bg-black pl-[65px] pr-[64px] overflow-hidden relative font-[Roboto,sans-serif]">
      <div className="w-[1151px] h-[720px] bg-white flex flex-col">
        <div className="h-[21px] flex items-center pl-[4px] text-[11px] text-[#222] shrink-0">
          <svg viewBox="0 0 16 16" className="w-[13px] h-[13px] mr-[3px]"><path d="M2 3l5-2 7 2v11H2z" fill="#e9e4c8" stroke="#77705a" /><rect x="5" y="7" width="7" height="6" fill="#8cc04c" stroke="#4d7d2c" /></svg>
          <span>Bez tytułu 1 - OpenOffice Calc</span>
          <div className="flex-1" />
          <Minus size={11} strokeWidth={1.2} color="#222" className="mr-[30px]" />
          <svg viewBox="0 0 11 11" className="w-[10px] h-[10px] mr-[30px]"><path d="M1 3h6v7H1zM3 3V1h7v6H7" fill="none" stroke="#333" /></svg>
          <X size={13} strokeWidth={1.1} color="#222" className="mr-[16px]" />
        </div>
        <Menu />
        <Toolbar1 />
        <Toolbar2 />
        <div className="h-[8px] border-y border-[#c8c8c8] flex items-center shrink-0 bg-white -mt-px pl-[421px]">
          <div className="w-[30px] h-px border-t border-dotted border-[#666]" />
        </div>
        <div className="h-[29px] flex items-center bg-[#f0f0f0] pl-[4px] shrink-0 text-[#222]">
          <Combo text="D10" className="w-[112px] h-[19px]" />
          <div className="w-[9px]" />
          <Slot>{Ic.fx}</Slot><Slot>{Ic.sum}</Slot><div className="w-px" /><Slot>{Ic.eq}</Slot>
          <div className="w-[8px]" />
          <div className="w-[670px] h-[19px] bg-white border border-[#999] border-r-[#ddd] border-b-[#ddd]" />
        </div>
        <div className="flex flex-1 min-h-0 relative">
          <div className="w-[883px] flex flex-col shrink-0 pt-px">
            <div className="flex flex-1 min-h-0">
              <Sheet />
              <div className="w-[13px] flex flex-col bg-[#f0f0f0] shrink-0">
                <div className="h-[3px] bg-black" />
                <div className="h-[13px] flex items-center justify-center"><ChevronUp size={10} strokeWidth={2} color="#333" /></div>
                <div className="h-[216px] bg-[#cdcdcd]" />
                <div className="flex-1" />
                <div className="h-[14px] flex items-center justify-center"><ChevronDown size={10} strokeWidth={2} color="#333" /></div>
              </div>
              <div className="w-[11px] flex items-center justify-center">
                <div className="w-px h-[30px] border-l border-dotted border-[#777]" />
              </div>
            </div>
            <TabsBar />
          </div>
          <Sidebar />
          <DeckBar />
        </div>
        <DrawBar />
        <StatusBar />
        <Taskbar />
      </div>
      <div className="absolute left-[527px] top-[3px] text-[20px] font-bold tracking-[0.9px] text-white [-webkit-text-stroke:3px_#5a5a5a] [paint-order:stroke_fill] font-['Liberation_Sans',sans-serif] whitespace-nowrap">www.BANDICAM.com</div>
      <svg viewBox="0 0 40 56" className="absolute left-[200px] top-[618px] w-[44px] h-[60px]">
        <path d="M7 10L38 38 27 40 35 51 24 56 15 44 7 50z" fill="#b9e000" stroke="#111" strokeWidth="2.500" />
        <circle cx="7" cy="6" r="3.500" fill="#ee2b3f" />
      </svg>
    </div>
  );
}
